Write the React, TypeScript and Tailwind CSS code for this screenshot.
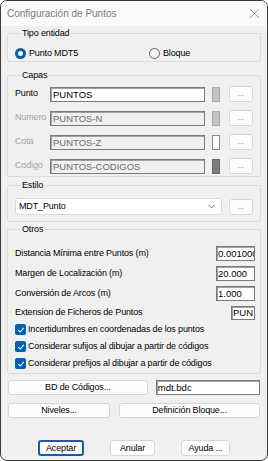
import React from 'react'

const body = { fontFamily: '"Liberation Sans", Arial, sans-serif' }

const txt = 'text-[9px] tracking-[-0.15px]'

function Radio({ checked, label }: { checked?: boolean; label: string }) {
  return (
    <label className={`flex items-center gap-[3px] text-black ${txt}`}>
      {checked ? (
        <span className="w-[11px] h-[11px] rounded-full bg-[#005fb8] flex items-center justify-center">
          <span className="w-[5px] h-[5px] rounded-full bg-white" />
        </span>
      ) : (
        <span className="w-[11px] h-[11px] rounded-full border border-[#5e5e5e] bg-[#f5f5f5]" />
      )}
      {label}
    </label>
  )
}

function Check({ label }: { label: string }) {
  return (
    <div className={`flex items-center gap-[2px] h-[13px] text-black whitespace-nowrap ${txt}`}>
      <span className="w-[11px] h-[11px] rounded-[2px] bg-[#005fb8] flex items-center justify-center">
        <svg width="8" height="8" viewBox="0 0 8 8" fill="none">
          <path d="M1.2 4.2 L3.2 6 L6.8 1.8" stroke="white" strokeWidth="1.1" />
        </svg>
      </span>
      {label}
    </div>
  )
}

function DotsButton() {
  return (
    <button className="w-[24px] h-[16px] bg-[#fdfdfd] border border-[#d6d6d6] rounded-[3px] text-[8px] leading-none text-[#7a7a7a] flex items-end justify-center pb-[3px]">
      ...
    </button>
  )
}

function Group({ title, className, children }: { title: string; className?: string; children: React.ReactNode }) {
  return (
    <fieldset className={`mx-[6px] border border-[#dcdcdc] rounded-[2px] ${className ?? ''}`}>
      <legend className={`ml-[5px] px-[2px] leading-[13px] text-black ${txt}`}>{title}</legend>
      {children}
    </fieldset>
  )
}

const layers = [
  { label: 'Punto', value: 'PUNTOS', on: true, swatch: 'bg-[#c3c3c3] border-[#a8a8a8]' },
  { label: 'Numero', value: 'PUNTOS-N', on: false, swatch: 'bg-[#c3c3c3] border-[#a8a8a8]' },
  { label: 'Cota', value: 'PUNTOS-Z', on: false, swatch: 'bg-white border-[#8a8a8a]' },
  { label: 'Codigo', value: 'PUNTOS-CODIGOS', on: false, swatch: 'bg-[#7f7f7f] border-[#6a6a6a]' },
]

const numbers = [
  { label: 'Distancia Mínima entre Puntos (m)', value: '0.001000' },
  { label: 'Margen de Localización (m)', value: '20.000' },
  { label: 'Conversión de Arcos (m)', value: '1.000' },
]

const btn = `bg-[#fdfdfd] border border-[#d6d6d6] rounded-[3px] leading-none text-black ${txt}`
const field = 'bg-white border border-[#7a7a7a] shadow-[inset_1px_1px_0_#a0a0a0] text-black text-[9.5px]'

export default function App() {
  return (
    <div style={body} className="w-[268px] h-[461px] bg-[#f0f0f0] border border-[#3a3a3a] rounded-[7px] overflow-hidden flex flex-col">
      <div className="h-[25px] shrink-0 bg-[#fafafa] flex items-center justify-between pl-[6px] pr-[6px]">
        <span className="text-[10px] text-[#7a7a7a]">Configuración de Puntos</span>
        <svg width="11" height="11" viewBox="0 0 11 11" className="mr-[1px]">
          <path d="M1 1 L10 10 M10 1 L1 10" stroke="#8a8a8a" strokeWidth="0.9" />
        </svg>
      </div>

      <Group title="Tipo entidad" className="mt-[1px] pl-[7px] pt-[7px] pb-[1px]">
        <div className="flex items-center h-[13px]">
          <div className="w-[134px]">
            <Radio checked label="Punto MDT5" />
          </div>
          <Radio label="Bloque" />
        </div>
      </Group>

      <Group title="Capas" className="mt-[7px] pl-[7px] pr-[6px] pt-[4px] pb-[2px]">
        <div className="flex flex-col gap-[8px]">
          {layers.map((l) => (
            <div key={l.label} className="flex items-center h-[16px]">
              <span className={`w-[35px] ${txt} ${l.on ? 'text-black' : 'text-[#a3a3a3]'}`}>{l.label}</span>
              <div
                className={`w-[155px] h-[15px] border border-[#7a7a7a] shadow-[inset_1px_1px_0_#a0a0a0] px-[2px] text-[9.5px] leading-[13px] ${
                  l.on ? 'bg-white text-black' : 'bg-[#f0f0f0] text-[#6d6d6d]'
                }`}
              >
                {l.value}
              </div>
              <span className={`ml-[7px] w-[8px] h-[15px] border ${l.swatch}`} />
              <div className="ml-[9px]">
                <DotsButton />
              </div>
            </div>
          ))}
        </div>
      </Group>

      <Group title="Estilo" className="mt-[2px] pl-[7px] pr-[6px] pt-[6px] pb-[6px]">
        <div className="flex items-center">
          <div className={`w-[207px] h-[17px] bg-white border border-[#dadada] rounded-[3px] flex items-center justify-between pl-[3px] pr-[6px] text-black ${txt}`}>
            MDT_Punto
            <svg width="7" height="5" viewBox="0 0 7 5">
              <path d="M0.5 0.8 L3.5 3.8 L6.5 0.8" stroke="#606060" strokeWidth="0.9" fill="none" />
            </svg>
          </div>
          <div className="ml-[7px]">
            <DotsButton />
          </div>
        </div>
      </Group>

      <Group title="Otros" className="mt-[1px] pl-[7px] pr-[5px] pt-[10px] pb-[3px]">
        <div className="flex flex-col gap-[5px]">
          {numbers.map((n) => (
            <div key={n.label} className={`flex items-center justify-between h-[15px] text-black ${txt}`}>
              {n.label}
              <div className={`w-[39px] h-[15px] pl-[1px] leading-[13px] overflow-hidden whitespace-nowrap tracking-normal ${field}`}>
                {n.value}
              </div>
            </div>
          ))}
          <div className={`flex items-center justify-between h-[14px] text-black ${txt}`}>
            Extension de Ficheros de Puntos
            <div className={`w-[24px] h-[14px] pl-[1px] leading-[12px] tracking-normal ${field}`}>PUN</div>
          </div>
        </div>
        <div className="flex flex-col gap-[4px] mt-[3px]">
          <Check label="Incertidumbres en coordenadas de los puntos" />
          <Check label="Considerar sufijos al dibujar a partir de códigos" />
          <Check label="Considerar prefijos al dibujar a partir de códigos" />
        </div>
      </Group>

      <div className="mt-[6px] mx-[7px] flex items-center gap-[8px]">
        <button className={`w-[141px] h-[15px] ${btn}`}>BD de Códigos...</button>
        <div className={`w-[105px] h-[15px] pl-[1px] leading-[13px] ${field}`}>mdt.bdc</div>
      </div>

      <div className="mt-[8px] mx-[7px] flex items-center gap-[9px]">
        <button className={`w-[102px] h-[15px] ${btn}`}>Niveles...</button>
        <button className={`w-[141px] h-[15px] ${btn}`}>Definición Bloque...</button>
      </div>

      <div className="mt-[22px] flex items-center pl-[37px] gap-[26px]">
        <button className={`w-[46px] h-[16px] bg-[#fdfdfd] border-2 border-[#1f5aa6] rounded-[3px] leading-none text-black ${txt}`}>
          Aceptar
        </button>
        <button className={`w-[45px] h-[16px] ${btn}`}>Anular</button>
        <button className={`w-[49px] h-[16px] ${btn}`}>Ayuda ...</button>
      </div>
    </div>
  )
}
